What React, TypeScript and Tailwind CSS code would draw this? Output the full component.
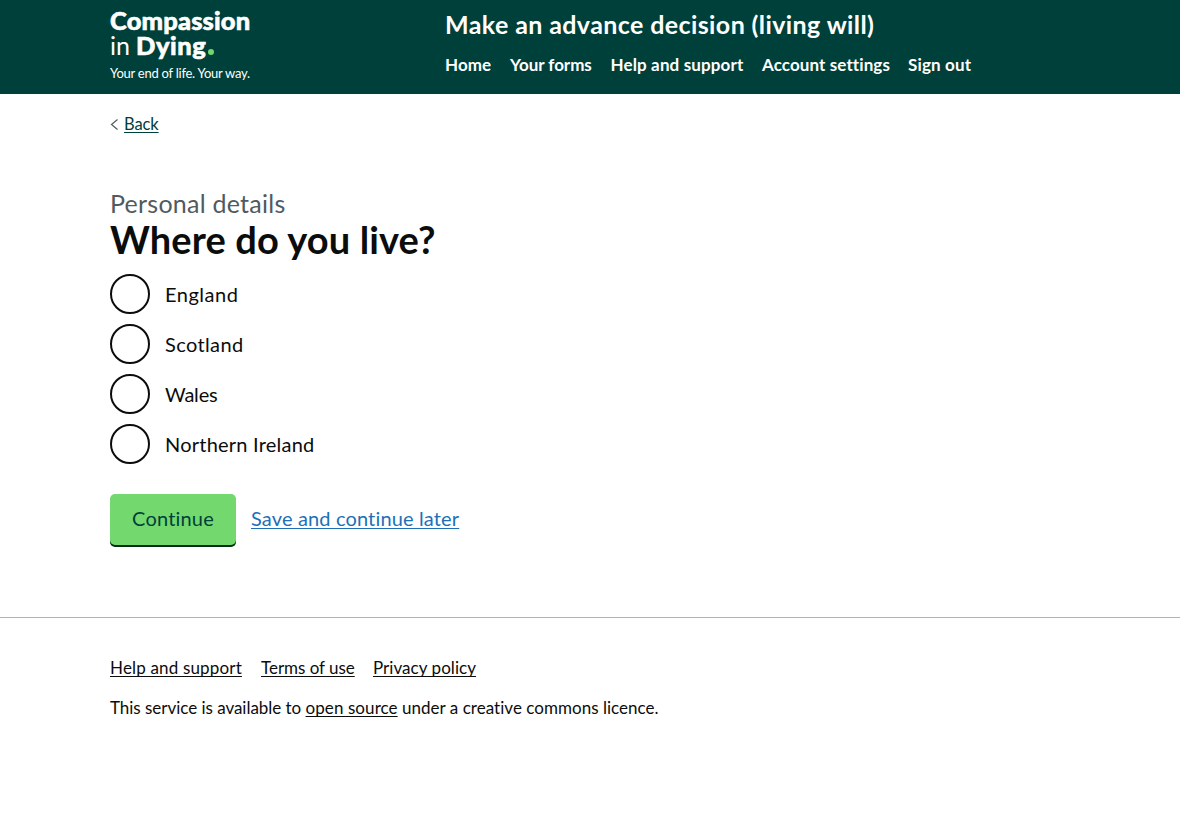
const navItems = [
  { label: "Home", tracking: "tracking-[0.05px]" },
  { label: "Your forms", tracking: "tracking-[-0.05px]" },
  { label: "Help and support", tracking: "tracking-[0.14px]" },
  { label: "Account settings", tracking: "tracking-[0.1px]" },
  { label: "Sign out", tracking: "tracking-[0.15px]" },
];

const countries = [
  { label: "England", tracking: "tracking-[0.5px]" },
  { label: "Scotland", tracking: "tracking-[0.38px]" },
  { label: "Wales", tracking: "tracking-[-0.2px]" },
  { label: "Northern Ireland", tracking: "tracking-[0.22px]" },
];

const footerLinks = [
  { label: "Help and support", tracking: "tracking-[0.17px]" },
  { label: "Terms of use", tracking: "tracking-[-0.03px]" },
  { label: "Privacy policy", tracking: "tracking-[0.05px]" },
];

const linkLine = "underline decoration-1 underline-offset-2 [text-decoration-skip-ink:none]";

function Logo() {
  return (
    <a href="#" className="block w-[335px] shrink-0 whitespace-nowrap pt-2">
      <span className="block text-[25.5px] font-black leading-[25px] tracking-[0.15px] [-webkit-text-stroke:0.6px_white]">
        Compassion
      </span>
      <span className="flex items-baseline text-[25px] leading-[25px]">
        <span className="w-[26px]">in</span>
        <span className="text-[25.5px] font-black tracking-[0.6px] [-webkit-text-stroke:0.6px_white]">Dying</span>
        <span className="ml-px size-1.5 rounded-full bg-[#6fd96c]" />
      </span>
      <span className="mt-[7px] block text-[13px] leading-4 tracking-[-0.25px]">Your end of life. Your way.</span>
    </a>
  );
}

function Header() {
  return (
    <header className="h-[94px] bg-[#00403a] text-white">
      <div className="mx-auto flex w-[960px]">
        <Logo />
        <div className="whitespace-nowrap pt-[10px]">
          <p className="mb-[17px] text-[25px] font-bold leading-[28px] tracking-[0.4px]">
            Make an advance decision (living will)
          </p>
          <nav className="grid grid-cols-[65px_100.5px_151.5px_146px_70px] text-[17px] font-bold leading-5">
            {navItems.map((item) => (
              <a key={item.label} href="#" className={item.tracking}>
                {item.label}
              </a>
            ))}
          </nav>
        </div>
      </div>
    </header>
  );
}

export default function App() {
  return (
    <div className="min-h-screen bg-white font-['Lato',sans-serif] text-[#0b0c0c]">
      <Header />

      <main className="mx-auto h-[523px] w-[960px] pt-5">
        <div className="flex items-center text-[16.5px] leading-5 text-[#00403a]">
          <svg className="mr-[5px] h-[11px] w-[9px]" viewBox="0 0 9 11" fill="none" stroke="#505a5f" strokeWidth="1.2">
            <path d="M7.5 0.5 1.5 5.5 7.5 10.5" />
          </svg>
          <a href="#" className={`${linkLine} tracking-[-0.1px]`}>Back</a>
        </div>

        <p className="mb-0.5 mt-[55px] text-[25px] leading-[28px] tracking-[0.25px] text-[#505a5f]">Personal details</p>
        <h1 className="text-[38px] font-bold leading-10 tracking-[0.12px]">Where do you live?</h1>

        <div className="mt-[15px] flex flex-col gap-[10px]">
          {countries.map((country) => (
            <label key={country.label} className="flex h-10 gap-[15px]">
              <input
                type="radio"
                name="country"
                className="size-10 appearance-none rounded-full border-2 border-[#0b0c0c]"
              />
              <span className={`pt-2 text-[20px] leading-[25px] ${country.tracking}`}>{country.label}</span>
            </label>
          ))}
        </div>

        <div className="mt-[30px] flex gap-[15px] text-[20px] leading-[25px]">
          <button className="h-[51px] w-[126px] rounded-[5px] bg-[#73d96f] pb-[2px] tracking-[0.2px] text-[#00403a] shadow-[0_2px_0_#002d18]">
            Continue
          </button>
          <a href="#" className={`${linkLine} pt-3 tracking-[0.15px] text-[#1d70b8]`}>Save and continue later</a>
        </div>
      </main>

      <footer className="border-t border-[#b1b4b6] pt-10 text-[17px] leading-5">
        <div className="mx-auto w-[960px] whitespace-nowrap">
          <div className="grid grid-cols-[151px_112px_120px]">
            {footerLinks.map((link) => (
              <a key={link.label} href="#" className={`${linkLine} ${link.tracking} justify-self-start`}>
                {link.label}
              </a>
            ))}
          </div>
          <p className="mt-5">
            <span className="tracking-[-0.03px]">This service is available to </span>
            <a href="#" className={`${linkLine} tracking-[0.08px]`}>open source</a>
            <span className="tracking-[0.03px]"> under a creative commons licence.</span>
          </p>
        </div>
      </footer>
    </div>
  );
}
